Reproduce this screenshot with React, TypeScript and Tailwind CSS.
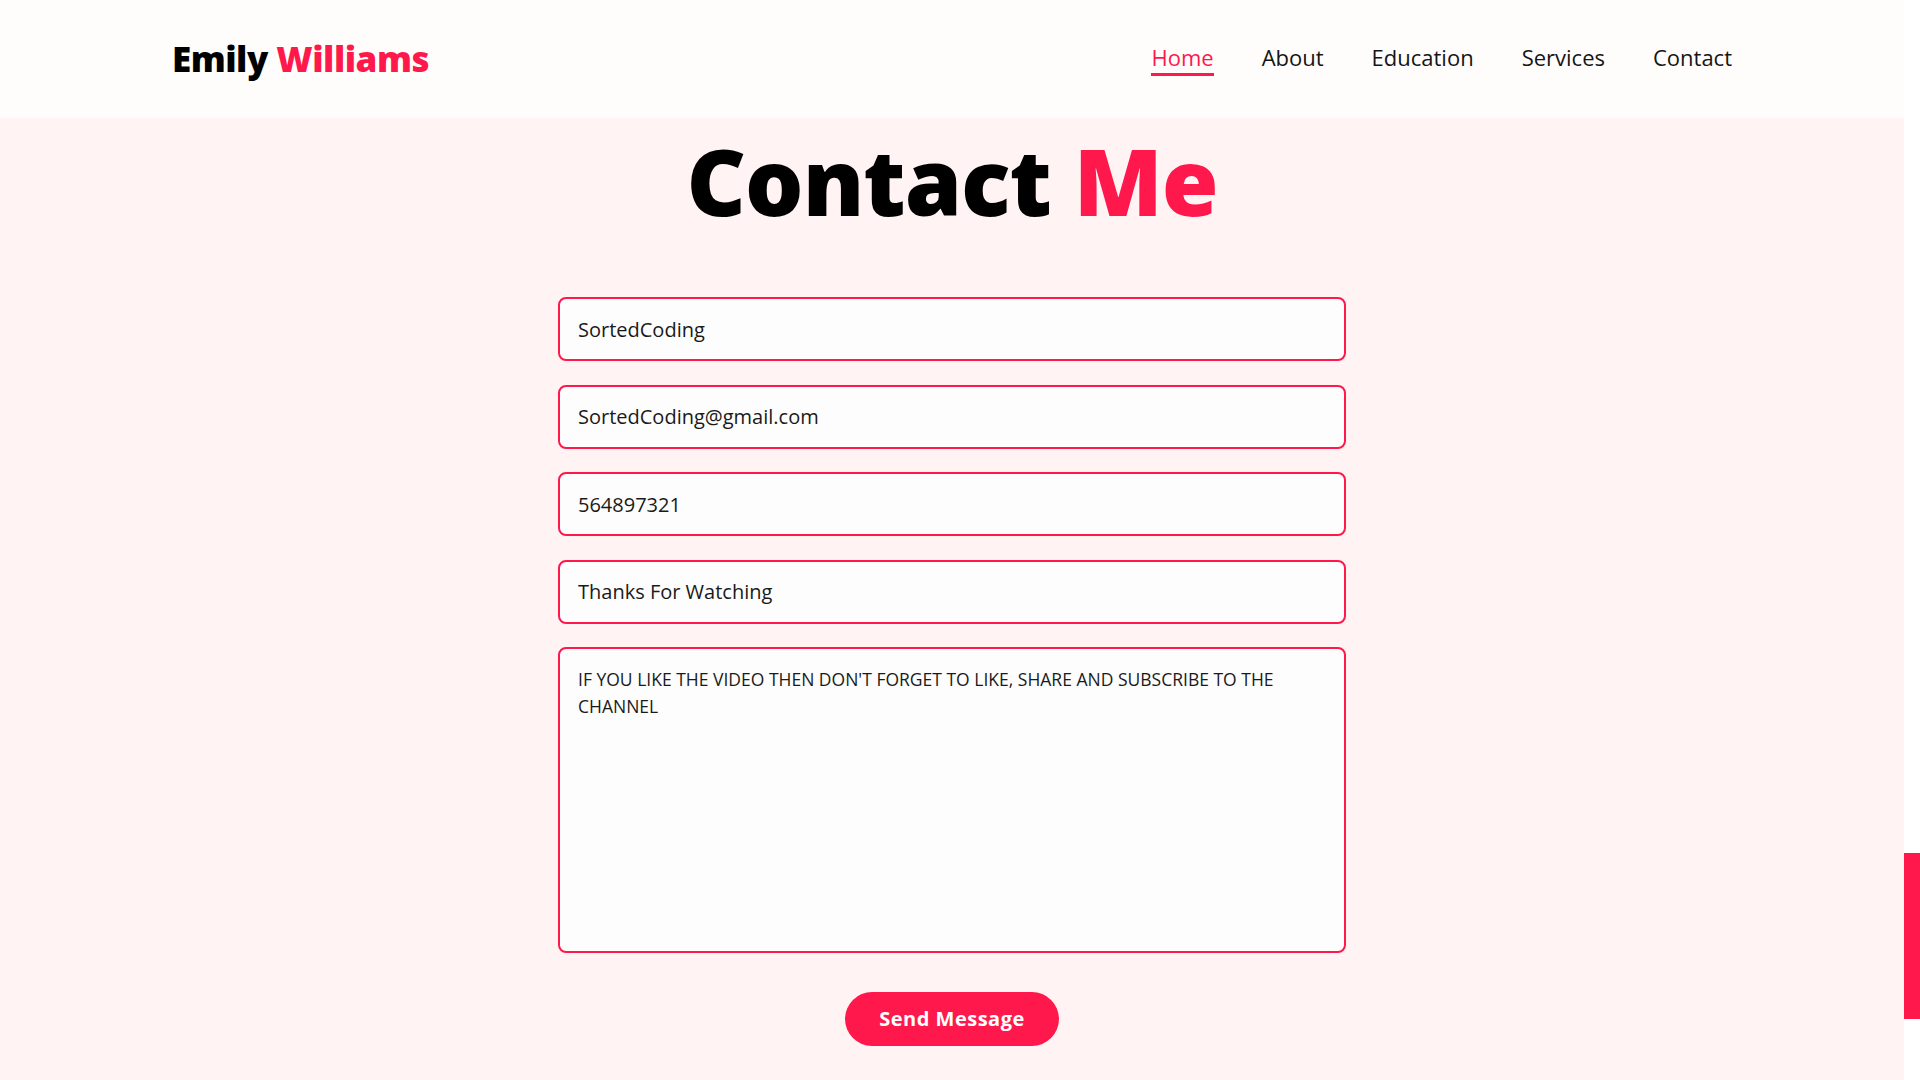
const navLinks = ["Home", "About", "Education", "Services", "Contact"];

const fields = [
  { type: "text", value: "SortedCoding" },
  { type: "email", value: "SortedCoding@gmail.com" },
  { type: "text", value: "564897321" },
  { type: "text", value: "Thanks For Watching" },
];

export default function App() {
  return (
    <div className="flex h-screen w-full overflow-hidden font-['Open_Sans',sans-serif] text-[#111]">
      <div className="flex flex-1 flex-col bg-[#fff4f3]">
        <header className="flex h-[118px] shrink-0 items-center justify-between bg-[#fffdfc] px-[172px]">
          <a href="#" className="text-[35px] font-extrabold tracking-[-0.5px] text-black">
            Emily <span className="text-[#ff184c]">Williams</span>
          </a>
          <nav className="flex items-center gap-12">
            {navLinks.map((link) => (
              <a
                key={link}
                href="#"
                className={
                  link === "Home"
                    ? "border-b-[3px] border-[#ff184c] pb-[2px] text-[22px] leading-[28px] text-[#ff184c]"
                    : "border-b-[3px] border-transparent pb-[2px] text-[22px] leading-[28px] text-[#151515]"
                }
              >
                {link}
              </a>
            ))}
          </nav>
        </header>

        <main className="flex flex-1 flex-col items-center">
          <h1 className="mt-[8px] text-[92px] font-extrabold leading-[1.2] tracking-[-1px] text-black">
            Contact <span className="text-[#ff184c]">Me</span>
          </h1>

          <form className="mt-[61px] flex w-[788px] flex-col gap-[23.5px]" onSubmit={(e) => e.preventDefault()}>
            {fields.map((f) => (
              <input
                key={f.value}
                type={f.type}
                defaultValue={f.value}
                className="h-16 w-full rounded-lg border-2 border-[#ff184c] bg-[#fdfdfd] px-[18px] text-[20px] text-[#1a1a1a] outline-none"
              />
            ))}
            <textarea
              defaultValue="IF YOU LIKE THE VIDEO THEN DON'T FORGET TO LIKE, SHARE AND SUBSCRIBE TO THE CHANNEL"
              className="h-[306px] w-full resize-none rounded-lg border-2 border-[#ff184c] bg-[#fdfdfd] px-[18px] pt-[17px] text-[17.5px] leading-[27px] text-[#1a1a1a] outline-none"
            />
            <div className="mt-[15px] flex justify-center">
              <button
                type="submit"
                className="h-[54px] w-[214px] rounded-full bg-[#ff184c] text-[20px] font-bold tracking-[0.5px] text-white"
              >
                Send Message
              </button>
            </div>
          </form>
        </main>
      </div>

      {/* scrollbar */}
      <div className="flex w-4 shrink-0 flex-col bg-white">
        <div className="mt-[853px] h-[166px] bg-[#ff184c]" />
      </div>
    </div>
  );
}
